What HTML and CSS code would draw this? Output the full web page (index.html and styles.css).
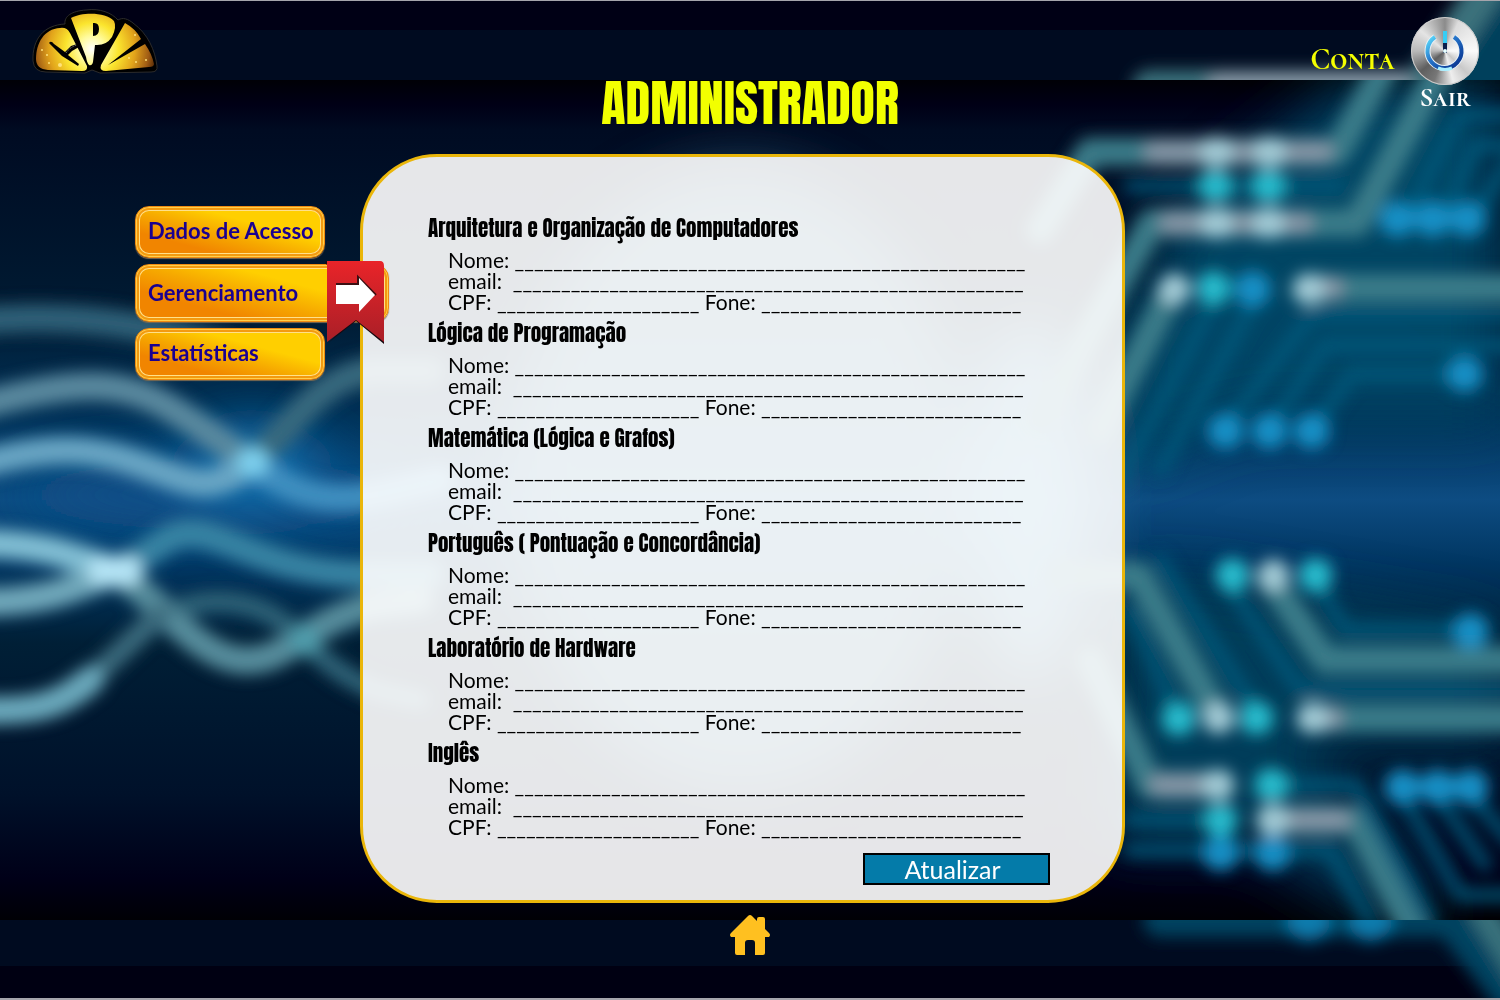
FILE: index.html
```html
<!DOCTYPE html>
<html lang="pt-BR">
<head>
<meta charset="utf-8">
<meta name="viewport" content="width=device-width, initial-scale=1">
<title>Administrador</title>
<link rel="stylesheet" href="styles.css">
</head>
<body>
<svg class="backdrop" viewBox="0 0 1500 1000" preserveAspectRatio="none" aria-hidden="true">
  <defs>
    <linearGradient id="night" x1="0" y1="0" x2="0" y2="1">
      <stop offset="0" stop-color="#000006"/>
      <stop offset=".03" stop-color="#000016"/>
      <stop offset=".06" stop-color="#000b22"/>
      <stop offset=".28" stop-color="#001b33"/>
      <stop offset=".4" stop-color="#003258"/>
      <stop offset=".5" stop-color="#0d4c82"/>
      <stop offset=".58" stop-color="#003560"/>
      <stop offset=".67" stop-color="#001f36"/>
      <stop offset=".85" stop-color="#00112a"/>
      <stop offset=".95" stop-color="#000018"/>
      <stop offset="1" stop-color="#000005"/>
    </linearGradient>
    <filter id="soft" x="-10%" y="-10%" width="120%" height="120%"><feGaussianBlur stdDeviation="8"/></filter>
    <filter id="haze" x="-30%" y="-30%" width="160%" height="160%"><feGaussianBlur stdDeviation="28"/></filter>
    <clipPath id="middle"><rect y="80" width="1500" height="840"/></clipPath>
    <clipPath id="bands"><path d="M0 1H1500V80H0zM0 920H1500V998H0z"/></clipPath>
  </defs>
  <rect width="1500" height="1000" fill="#a5a5ac"/>
  <rect y="1" width="1500" height="997" fill="#000b20"/>
  <g clip-path="url(#bands)">
    <rect y="1" width="1500" height="29" fill="#000015"/>
    <rect y="966" width="1500" height="32" fill="#000012"/>
    <g filter="url(#soft)" fill="none" stroke-linecap="round" stroke-linejoin="round">
      <path d="M1430 110L1510 -20L1560 90Z" fill="#05405c"/>
      <path d="M1150 88H1420L1492 -20" stroke="#3a717c" stroke-width="36"/>
      <path d="M1220 86H1400" stroke="#8898a6" stroke-width="26"/>
      <path d="M1160 920H1450L1520 1010" stroke="#044360" stroke-width="34"/>
      <path d="M1480 905L1530 985" stroke="#37717c" stroke-width="30"/>
      <path d="M1308 920h1M1370 920h1" stroke="#107cad" stroke-width="42"/>
    </g>
  </g>
  <g clip-path="url(#middle)">
    <rect y="80" width="1500" height="840" fill="url(#night)"/>
    <g filter="url(#haze)">
      <path d="M1350 80H1500V330H1160V230Z" fill="#044463"/>
      <path d="M1120 300H1300L1500 340V420H1250L1120 470Z" fill="#004565"/>
      <path d="M1120 580H1200L1500 630V740H1300L1450 920H1380L1250 840H1110Z" fill="#003e5a"/>
      <ellipse cx="740" cy="480" rx="230" ry="310" fill="#3f7f9c" opacity=".7"/>
      <ellipse cx="1030" cy="500" rx="60" ry="180" fill="#5aaad2" opacity=".7"/>
      <ellipse cx="210" cy="495" rx="200" ry="34" fill="#0b4f88"/>
      <ellipse cx="252" cy="462" rx="60" ry="36" fill="#1574b4"/>
    </g>
    <g filter="url(#soft)" fill="none" stroke-linecap="round" stroke-linejoin="round">
      <g stroke-width="28">
        <path d="M-30 322C80 310 170 330 230 350" stroke="#2d6078"/>
        <path d="M-30 408C70 380 120 378 170 408S230 450 252 462" stroke="#5a899f"/>
        <path d="M252 462C290 430 315 380 370 371H430" stroke="#39697e"/>
        <path d="M-30 467C60 440 100 450 150 468S210 492 252 462" stroke="#69a6c4"/>
        <path d="M252 462C285 490 320 506 380 494L440 480" stroke="#3f8fc0"/>
        <path d="M-30 543C40 543 70 555 115 571" stroke="#82bfd4"/>
        <path d="M-30 602C50 604 80 585 115 571" stroke="#71a9bb"/>
        <path d="M115 571C155 555 165 528 200 534S285 578 380 574H430" stroke="#3883a3"/>
        <path d="M115 571C160 600 195 655 240 660S300 626 370 606L420 600" stroke="#568d9c"/>
        <path d="M185 606C245 590 285 620 304 640S340 675 375 690L420 700" stroke="#2f6478" stroke-width="20"/>
        <path d="M60 700C95 680 120 650 160 615" stroke="#3a6b7d" stroke-width="22"/>
        <path d="M-30 710C40 713 60 704 90 680" stroke="#6aa9bc"/>
      </g>
      <g stroke="#b4e4f5" stroke-width="29">
        <path d="M252 462h2" stroke="#7dd0ee"/>
        <path d="M102 571h26"/>
        <path d="M304 640h1" stroke="#4f9dac"/>
      </g>
      <g stroke="#3a7c89" stroke-width="28">
        <path d="M1040 230L1090 152H1337L1383 70"/>
        <path d="M1040 420L1152 223H1357L1440 70"/>
        <path d="M1172 290L1100 430"/>
        <path d="M1310 288H1530"/>
        <path d="M1060 575H1138L1215 710"/>
        <path d="M1270 580L1325 660H1530"/>
        <path d="M1315 718H1530"/>
        <path d="M1090 660L1150 785H1218"/>
        <path d="M1270 820H1355L1415 935"/>
      </g>
      <g stroke="#045a7d" stroke-width="14" opacity=".85">
        <path d="M1410 210L1460 115H1530M1446 210L1475 145H1530M1475 215L1510 160"/>
        <path d="M1227 425L1312 315H1530M1272 425L1325 345H1530M1315 425L1352 374H1460"/>
        <path d="M1215 300L1120 480M1255 300L1160 470"/>
        <path d="M1130 610L1175 710M1160 560L1255 710M1232 590L1300 690H1530M1315 580L1345 630H1470"/>
        <path d="M1130 820H1210M1130 850H1330L1370 920M1270 785H1355L1430 920M1405 800L1460 895H1530M1440 800L1485 865M1475 800L1510 840"/>
        <path d="M1130 186H1340"/>
      </g>
      <g stroke="#8495a5" stroke-width="22">
        <path d="M1155 152H1322M1170 223H1302M1308 288H1332M1310 718H1332M1160 785H1218M1275 820H1340"/>
      </g>
      <g stroke="#a2cad5" stroke-width="31">
        <path d="M1216 152h1M1269 152h1M1216 223h1M1268 223h1M1174 289h1M1308 289h1M1273 575h1M1218 718h1M1312 718h1M1218 785h1M1272 820h1"/>
      </g>
      <g stroke="#26bccd" stroke-width="33">
        <path d="M1215 186h1M1268 186h1M1213 288h1M1232 575h1M1315 575h1M1178 719h1M1256 718h1M1271 785h1M1220 820h1"/>
      </g>
      <g stroke="#1890c6" stroke-width="35">
        <path d="M1252 289h1M1397 219h1M1432 219h1M1467 219h1M1464 374h1M1225 431h1M1269 431h1M1311 431h1M1470 631h1M1402 787h1M1437 787h1M1470 787h1M1220 853h1M1272 853h1"/>
      </g>
    </g>
  </g>
</svg>

<header class="topbar">
  <a class="logo" href="#" aria-label="Página inicial">
    <svg width="126" height="65" viewBox="0 0 126 65" aria-hidden="true">
      <defs>
        <radialGradient id="gold" gradientUnits="userSpaceOnUse" cx="60" cy="40" r="66">
          <stop offset="0" stop-color="#fff"/>
          <stop offset=".2" stop-color="#fffb9c"/>
          <stop offset=".4" stop-color="#fbe52e"/>
          <stop offset=".65" stop-color="#e2a41b"/>
          <stop offset=".86" stop-color="#a05c14"/>
          <stop offset="1" stop-color="#4a2205"/>
        </radialGradient>
      </defs>
      <path d="M1 52C0 30 12 16 33 15C32 7 40 2 54 1C68-1 80 4 86 11C91 8 96 10 101 14C116 25 123 41 125 57Q126 63 119 63L68 64L60 61L53 64L14 63Q2 63 1 52Z" fill="#000" stroke="#2c2c2c"/>
      <path d="M4 50C4 34 12 20 28 19Q35 18 38 24L55 57Q56 62 50 62L16 61Q4 60 4 50Z" fill="url(#gold)"/>
      <path d="M39 9C50 3 74 3 82 12Q85 18 80 28Q74 37 63 36L61 53Q60 57 57 56Q55 54 54 48Z" fill="url(#gold)"/>
      <path d="M93 14Q104 20 109 30L76 56L113 35Q120 45 122 55Q122 58 117 58L74 62Q67 62 69 56Z" fill="url(#gold)"/>
      <path d="M61 14Q67 13 67 20Q67 27 61 27Z" fill="#000"/>
      <path d="M17 34Q19 31 22 35L33 43L39 37L45 35L47 38L40 42L36 46L47 55L46 57L30 47Z" fill="#000"/>
      <path d="M34 44Q38 38 45 36" fill="none" stroke="#999" stroke-dasharray="1 1"/>
      <g fill="#ffe27a"><circle cx="10" cy="41" r="1"/><circle cx="15" cy="46" r="1"/><circle cx="28" cy="56" r="2"/><circle cx="17" cy="54" r="1"/><circle cx="103" cy="26" r="1"/><circle cx="114" cy="51" r="1"/><circle cx="104" cy="53" r="1"/><circle cx="97" cy="49" r="1"/></g>
    </svg>
  </a>
  <div class="account">
    <a class="account-link" href="#">Conta</a>
    <a class="exit" href="#">
      <span class="power">
        <svg width="68" height="68" viewBox="0 0 68 68" aria-hidden="true">
          <defs>
            <linearGradient id="blue" x1="0" y1="0" x2="1" y2="1">
              <stop offset="0" stop-color="#5de0ff"/><stop offset=".4" stop-color="#2878cc"/><stop offset=".7" stop-color="#134ea8"/><stop offset="1" stop-color="#0a318a"/>
            </linearGradient>
          </defs>
          <path d="M24 20A17 17 0 1 0 43 20" fill="none" stroke="#e8f0f5" stroke-width="6"/>
          <path d="M24 20A17 17 0 1 0 43 20" fill="none" stroke="url(#blue)" stroke-width="4"/>
          <path d="M27 51Q34 54 41 51" fill="none" stroke="#a8efff" stroke-width="3"/>
          <path d="M32 14H36V36H32Z" fill="#0b1f4c"/>
          <path d="M32 14H36V26H32Z" fill="#37cdf5"/>
          <circle cx="34" cy="34" r="2" fill="#e8ffff"/>
        </svg>
      </span>
      <span>Sair</span>
    </a>
  </div>
</header>

<h1 class="title">ADMINISTRADOR</h1>

<main class="content">
  <nav class="menu" aria-label="Administração">
    <a class="menu-item" href="#">Dados de Acesso</a>
    <a class="menu-item active" href="#" aria-current="page">Gerenciamento
      <svg class="ribbon" width="60" height="84" viewBox="0 0 60 84" aria-hidden="true">
        <defs><linearGradient id="red" x1="0" y1="0" x2="0" y2="1"><stop offset="0" stop-color="#e92429"/><stop offset="1" stop-color="#a91f27"/></linearGradient></defs>
        <path d="M0 1Q1 0 4 0V4Q0 4 0 1ZM3 82L31 60L59 83V78L31 56Z" fill="#160a10"/>
        <path d="M2 0H55Q59 0 59 5V81L31 59L2 81Z" fill="url(#red)"/>
        <path d="M11 23H33V16L51 34" fill="none" stroke="#3b1013" stroke-width="2"/>
        <path d="M11 24H34V17L50 34L34 51V43H11Z" fill="#fff"/>
      </svg>
    </a>
    <a class="menu-item" href="#">Estatísticas</a>
  </nav>

  <form class="panel">
    <section class="subject">
      <h2>Arquitetura e Organização de Computadores</h2>
      <p>Nome: _____________________________________________________</p>
      <p>email:&nbsp; _____________________________________________________</p>
      <p>CPF: _____________________ Fone: ___________________________</p>
    </section>
    <section class="subject">
      <h2>Lógica de Programação</h2>
      <p>Nome: _____________________________________________________</p>
      <p>email:&nbsp; _____________________________________________________</p>
      <p>CPF: _____________________ Fone: ___________________________</p>
    </section>
    <section class="subject">
      <h2>Matemática (Lógica e Grafos)</h2>
      <p>Nome: _____________________________________________________</p>
      <p>email:&nbsp; _____________________________________________________</p>
      <p>CPF: _____________________ Fone: ___________________________</p>
    </section>
    <section class="subject">
      <h2>Português ( Pontuação e Concordância)</h2>
      <p>Nome: _____________________________________________________</p>
      <p>email:&nbsp; _____________________________________________________</p>
      <p>CPF: _____________________ Fone: ___________________________</p>
    </section>
    <section class="subject">
      <h2>Laboratório de Hardware</h2>
      <p>Nome: _____________________________________________________</p>
      <p>email:&nbsp; _____________________________________________________</p>
      <p>CPF: _____________________ Fone: ___________________________</p>
    </section>
    <section class="subject">
      <h2>Inglês</h2>
      <p>Nome: _____________________________________________________</p>
      <p>email:&nbsp; _____________________________________________________</p>
      <p>CPF: _____________________ Fone: ___________________________</p>
    </section>
    <button class="update" type="button">Atualizar</button>
  </form>
</main>

<footer class="bottom">
  <a class="home" href="#" aria-label="Início">
    <svg width="40" height="40" viewBox="0 0 40 40" aria-hidden="true">
      <path d="M18 1Q20-1 22 1L27 6V4Q27 2 29 2H33Q35 2 35 4V14L39 18Q41 20 39 22H35V38Q35 40 33 40H25V28Q25 25 22 25H18Q15 25 15 28V40H7Q5 40 5 38V22H1Q-1 20 1 18Z" fill="#ffc020"/>
    </svg>
  </a>
</footer>
</body>
</html>
```
FILE: styles.css
```css
* { box-sizing: border-box; }

body {
  margin: 0;
  min-height: 100vh;
  background: #000b20;
  color: #000;
  font-family: Lato, Carlito, sans-serif;
}

h1, h2, p { margin: 0; }
a { color: inherit; text-decoration: none; }
svg { display: block; }

.backdrop {
  position: fixed;
  inset: 0;
  z-index: -1;
  width: 100%;
  height: 100%;
}

.topbar {
  display: flex;
  justify-content: space-between;
  align-items: flex-start;
  height: 80px;
  padding: 9px 21px 0 32px;
}

.account {
  display: flex;
  gap: 16px;
  padding-top: 8px;
  font-family: "Cormorant SC", "Liberation Serif", serif;
  font-weight: 700;
}

.account-link {
  padding-top: 25px;
  color: #f5ff00;
  font-size: 30px;
  line-height: 36px;
}

.exit {
  display: flex;
  flex-direction: column;
  align-items: center;
  color: #fff;
  font-size: 27px;
  line-height: 26px;
}

.power {
  border-radius: 50%;
  background: conic-gradient(#8b8b8b, #dcdcdc 25deg, #fafafa 90deg, #c9c9c9 135deg, #eee 165deg, #777 200deg, #5f5f5f 230deg, #b9b9b9 270deg, #e4e4e4 310deg, #8b8b8b);
  box-shadow: inset 0 0 0 1px #ccc;
}

.title {
  height: 74px;
  color: #f2ff00;
  font-family: Anton, "Liberation Sans Narrow", "Liberation Sans", sans-serif;
  font-size: 50px;
  line-height: 46px;
  font-weight: 400;
  text-align: center;
}

.content {
  display: flex;
  align-items: flex-start;
  padding: 0 25% 0 9%;
}

.menu {
  position: relative;
  z-index: 1;
  display: flex;
  flex: 0 0 225px;
  flex-direction: column;
  align-items: flex-start;
  gap: 6px;
  min-width: 0;
  padding-top: 52px;
}

.menu-item {
  display: flex;
  align-items: center;
  width: 190px;
  height: 52px;
  padding: 0 0 2px 12px;
  border: 1px solid #f08a10;
  border-radius: 14px;
  background: linear-gradient(195deg, #ffcf00 35%, #f6a800 55%, #f18500 75%);
  box-shadow: inset 0 0 0 1px #ffd04a, inset 0 0 0 3px #f39a10, inset 0 0 0 4px #ffe08a, 0 1px 1px #7c6a50;
  color: #1a0090;
  font-size: 22px;
  line-height: 30px;
  font-weight: 700;
  white-space: nowrap;
}

.menu-item.active {
  position: relative;
  width: 254px;
  height: 58px;
  padding-bottom: 0;
}

.ribbon {
  position: absolute;
  top: -4px;
  right: 3px;
}

.panel {
  flex: 1;
  display: flex;
  flex-direction: column;
  min-width: 0;
  padding: 50px 72px 15px 65px;
  border: 3px solid #eab60a;
  border-radius: 77px;
  background: rgba(255, 255, 255, .9);
}

.subject h2 {
  font-family: Anton, "Liberation Sans Narrow", "Liberation Sans", sans-serif;
  font-size: 21px;
  line-height: 42px;
  font-weight: 400;
  white-space: nowrap;
}

.subject p {
  padding-left: 20px;
  font-size: 21px;
  line-height: 21px;
  white-space: nowrap;
}

.update {
  align-self: flex-end;
  width: 187px;
  height: 32px;
  margin-top: 16px;
  padding: 0 8px 0 0;
  border: 2px solid #000;
  background: #047ba9;
  color: #fff;
  font: inherit;
  font-size: 25px;
  line-height: 28px;
}

.bottom {
  display: flex;
  justify-content: center;
  padding: 12px 0 16px;
}
```
